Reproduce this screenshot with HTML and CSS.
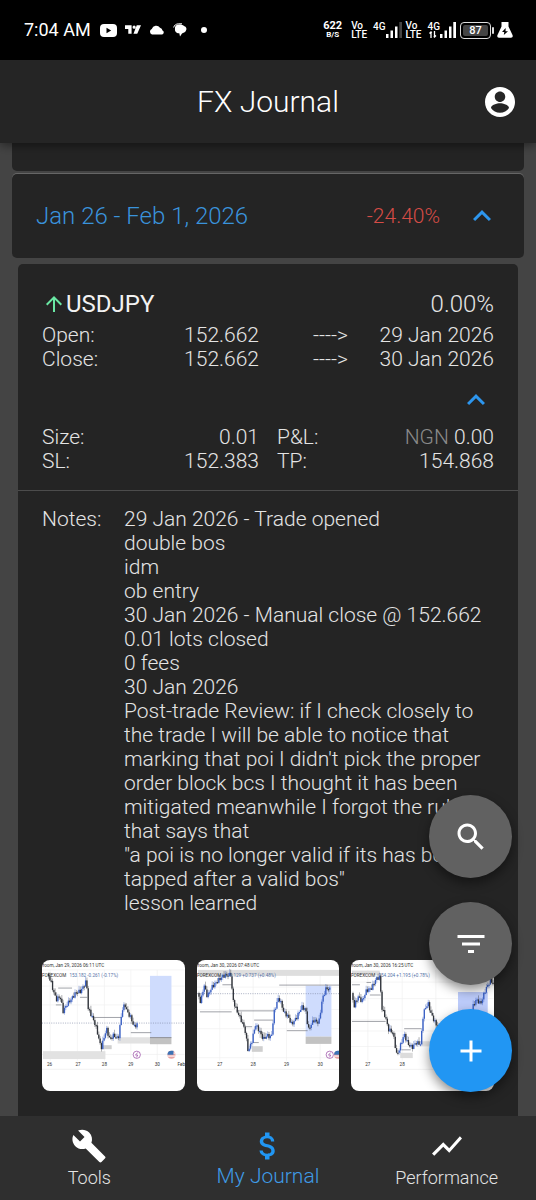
FILE: index.html
```html
<!DOCTYPE html>
<html lang="en">
<head>
<meta charset="utf-8">
<meta name="viewport" content="width=device-width, initial-scale=1">
<title>FX Journal</title>
<link rel="stylesheet" href="styles.css">
</head>
<body>
<div class="status">
  <div class="status-left">
    <span class="clock">7:04 AM</span>
    <svg width="17" height="13" viewBox="0 0 17 13"><rect width="17" height="13" rx="4" fill="#fff"/><path d="M6.5 3.8v5.4L11.2 6.5z" fill="#000"/></svg>
    <svg width="16" height="10" viewBox="0 0 17 10"><path d="M0 0h7v9H3.500V4H0zM12.500 0H17l-4 9H9zM8 2a1.700 1.700 0 1 0 3.400 0 1.700 1.700 0 1 0-3.400 0z" fill="#fff"/></svg>
    <svg width="16" height="10" viewBox="0 0 16 10"><path d="M3 9.500a3 3 0 0 1-.2-5.600A4.600 4.600 0 0 1 11 2.700a3.300 3.300 0 0 1 2.500 2.700 2.200 2.200 0 0 1-.3 4.100z" fill="#fff"/></svg>
    <svg width="14" height="14" viewBox="0 0 14 14"><path d="M3 2.500C5 1 9 1 11 3c2.500.5 3 3 2 4.500C12.500 9.500 10 10 9 10.500L7 13.500 6.300 10.300C3.500 10.500 1.500 8 2 6c-.2-1.500.2-2.700 1-3.500z" fill="#fff"/><path d="M.7 4.500C1 2.500 3 .8 5.500.8H9" fill="none" stroke="#fff"/></svg>
    <svg class="dot" width="6" height="6" viewBox="0 0 6 6"><circle cx="3" cy="3" r="3" fill="#fff"/></svg>
  </div>
  <div class="status-right">
    <div class="speed"><b>622</b><small>B/S</small></div>
    <div class="volte"><span>Vo</span><span>LTE</span></div>
    <div class="signal"><span>4G</span>
      <svg width="16" height="16" viewBox="0 0 16 16"><path d="M0 12h2.500v4H0zM4.500 8.500H7V16H4.500zM9 4.500h2.500V16H9z" fill="#fff"/><path d="M13.300 0H16v16h-2.700z" fill="#444"/></svg></div>
    <div class="volte"><span>Vo</span><span>LTE</span></div>
    <div class="signal"><span class="net">4G<svg width="8" height="7" viewBox="0 0 8 7"><path d="M2 7V1M.5 2.500L2 1l.8.800M5.500 0v6M4.700 5.200l.8.800L7 4.500" fill="none" stroke="#fff" stroke-width="1.300"/></svg></span>
      <svg width="16" height="16" viewBox="0 0 16 16"><path d="M0 12h2.500v4H0zM4.500 8.500H7V16H4.500zM9 4.500h2.500V16H9zM13.300 0H16v16h-2.700z" fill="#fff"/></svg></div>
    <div class="battery"><span>87</span></div>
    <svg class="flask" width="16" height="16" viewBox="0 0 16 16"><path d="M4.500 0h7v4.500l4 8.500c.6 1.500 0 2.700-1.500 2.700H2C.5 15.700-.1 14.500.5 13l4-8.500z" fill="#fff"/><path d="M8.700 6L5 10h2.300L6.800 13 11 9.200H8.500z" fill="#000"/></svg>
  </div>
</div>

<header class="appbar">
  <h1>FX Journal</h1>
  <button class="icon-btn" aria-label="Account"><svg class="icon" viewBox="0 0 24 24"><path d="M12 2C6.480 2 2 6.480 2 12s4.480 10 10 10 10-4.480 10-10S17.520 2 12 2zm0 3c1.930 0 3.500 1.570 3.500 3.500S13.930 12 12 12s-3.500-1.570-3.500-3.500S10.070 5 12 5zm0 14.200c-2.500 0-4.710-1.280-6-3.220.03-1.990 4-3.080 6-3.080 1.990 0 5.970 1.090 6 3.080-1.290 1.940-3.500 3.220-6 3.220z"/></svg></button>
</header>

<main class="journal">
  <div class="scroll">
    <div class="week-prev"></div>
    <section class="week">
      <h2>Jan 26 - Feb 1, 2026</h2>
      <span class="loss">-24.40%</span>
      <button class="icon-btn blue" aria-label="Collapse week"><svg class="icon" viewBox="0 0 24 24"><path d="M12 8l-6 6 1.410 1.410L12 10.830l4.590 4.580L18 14z"/></svg></button>
    </section>

    <article class="trade">
      <div class="trade-top">
        <div class="trade-head">
          <svg class="up" viewBox="0 0 24 24"><path d="M4 12l1.410 1.410L11 7.830V20h2V7.830l5.580 5.590L20 12l-8-8-8 8z"/></svg>
          <h3>USDJPY</h3>
          <span class="pct">0.00%</span>
        </div>
        <div class="pairs">
          <div class="pair"><span>Open:</span><span>152.662</span></div>
          <div class="pair when"><span>----&gt;</span><span>29 Jan 2026</span></div>
          <div class="pair"><span>Close:</span><span>152.662</span></div>
          <div class="pair when"><span>----&gt;</span><span>30 Jan 2026</span></div>
        </div>
        <div class="toggle"><button class="icon-btn blue" aria-label="Collapse trade"><svg class="icon" viewBox="0 0 24 24"><path d="M12 8l-6 6 1.410 1.410L12 10.830l4.590 4.580L18 14z"/></svg></button></div>
        <div class="pairs">
          <div class="pair"><span>Size:</span><span>0.01</span></div>
          <div class="pair"><span>P&amp;L:</span><span><i>NGN</i> 0.00</span></div>
          <div class="pair"><span>SL:</span><span>152.383</span></div>
          <div class="pair"><span>TP:</span><span>154.868</span></div>
        </div>
      </div>
      <div class="notes">
        <span>Notes:</span>
        <div class="notes-text">
          <p>29 Jan 2026 - Trade opened</p>
          <p>double bos</p>
          <p>idm</p>
          <p>ob entry</p>
          <p>30 Jan 2026 - Manual close @ 152.662</p>
          <p>0.01 lots closed</p>
          <p>0 fees</p>
          <p>30 Jan 2026</p>
          <p>Post-trade Review: if I check closely to the trade I will be able to notice that marking that poi I didn't pick the proper order block bcs I thought it has been mitigated meanwhile I forgot the rule that says that</p>
          <p>"a poi is no longer valid if its has been tapped after a valid bos"</p>
          <p>lesson learned</p>
        </div>
      </div>
      <div class="thumbs" id="thumbs"></div>
    </article>
  </div>

  <div class="fabs">
    <button class="fab" aria-label="Search"><svg class="icon" viewBox="0 0 24 24"><path d="M15.500 14h-.79l-.28-.27C15.410 12.590 16 11.110 16 9.500 16 5.910 13.090 3 9.500 3S3 5.910 3 9.500 5.910 16 9.500 16c1.610 0 3.090-.59 4.230-1.570l.27.28v.79l5 4.990L20.490 19l-4.990-5zm-6 0C7.010 14 5 11.990 5 9.500S7.010 5 9.500 5 14 7.010 14 9.500 11.990 14 9.500 14z"/></svg></button>
    <button class="fab" aria-label="Filter"><svg class="icon" viewBox="0 0 24 24"><path d="M10 18h4v-2h-4v2zM3 6v2h18V6H3zm3 7h12v-2H6v2z"/></svg></button>
    <button class="fab add" aria-label="Add trade"><svg class="icon" viewBox="0 0 24 24"><path d="M19 13h-6v6h-2v-6H5v-2h6V5h2v6h6v2z"/></svg></button>
  </div>
</main>

<nav class="tabs">
  <a href="#tools"><svg class="icon" viewBox="0 0 24 24"><path d="M22.700 19l-9.100-9.100c.9-2.300.4-5-1.500-6.900-2-2-5-2.400-7.400-1.300L9 6 6 9 1.600 4.700C.4 7.100.9 10.100 2.900 12.100c1.900 1.900 4.600 2.400 6.900 1.500l9.100 9.100c.4.4 1 .4 1.400 0l2.300-2.300c.5-.4.5-1.100.1-1.400z"/></svg><span>Tools</span></a>
  <a href="#journal" class="active" aria-current="page"><svg class="icon" viewBox="0 0 24 24"><path d="M11.800 10.900c-2.270-.59-3-1.200-3-2.150 0-1.090 1.010-1.850 2.700-1.850 1.780 0 2.440.85 2.500 2.100h2.210c-.07-1.720-1.120-3.300-3.210-3.810V3h-3v2.160c-1.940.42-3.500 1.680-3.500 3.610 0 2.310 1.910 3.460 4.700 4.130 2.500.6 3 1.480 3 2.410 0 .69-.49 1.790-2.700 1.790-2.060 0-2.870-.92-2.980-2.100h-2.200c.12 2.190 1.760 3.420 3.680 3.830V21h3v-2.150c1.950-.37 3.500-1.500 3.500-3.550 0-2.840-2.430-3.810-4.700-4.400z"/></svg><span>My Journal</span></a>
  <a href="#performance"><svg class="icon" viewBox="0 0 24 24"><path d="M3.500 18.490l6-6.010 4 4L22 6.920l-1.410-1.410-7.090 7.970-4-4L2 16.990z"/></svg><span>Performance</span></a>
</nav>
<script src="charts.js"></script>
</body>
</html>
```

FILE: styles.css
```css
* { box-sizing: border-box; }

body {
  margin: 0;
  height: 100vh;
  display: flex;
  flex-direction: column;
  background: #444;
  color: #e4e4e4;
  font: 300 21px/24px Roboto, "Liberation Sans", sans-serif;
}

h1, h2, h3, p { margin: 0; font-weight: 300; }

button { border: 0; padding: 0; background: none; color: inherit; cursor: pointer; }

svg { display: block; flex: none; }

.icon { width: 36px; height: 36px; fill: currentColor; }

.icon-btn { display: block; color: #fff; }

.blue { color: #2d96ee; }

/* System status bar */
.status {
  flex: none;
  height: 60px;
  padding: 0 23px 0 24px;
  display: flex;
  align-items: center;
  justify-content: space-between;
  background: #000;
  color: #fff;
}

.status-left { display: flex; align-items: center; gap: 8px; }

.clock { font-size: 18px; font-weight: 400; margin-right: 1px; }

.dot { margin-left: 6px; }

.status-right { display: flex; align-items: center; font-weight: 500; }

.speed { display: flex; flex-direction: column; align-items: center; margin-right: 9px; font-size: 11px; line-height: 10px; }

.speed small { font-size: 8px; line-height: 8px; font-weight: 700; }

.volte { display: flex; flex-direction: column; margin-right: 6px; font-size: 10px; line-height: 9px; }

.signal { display: flex; align-items: flex-end; margin-right: 4px; font-size: 10px; line-height: 9px; }

.signal > span { height: 16px; }

.net svg { margin-left: 1px; }

.battery {
  position: relative;
  width: 31px;
  height: 17px;
  padding: 2px;
  margin-right: 6px;
  border: 1px solid #ddd;
  border-radius: 4px;
}

.battery span {
  display: block;
  height: 11px;
  background: #444;
  border-radius: 2px;
  font-size: 11px;
  line-height: 11px;
  text-align: center;
}

.battery::after {
  content: "";
  position: absolute;
  right: -4px;
  top: 4px;
  width: 2px;
  height: 7px;
  border-radius: 1px;
  background: #ddd;
}

/* App bar */
.appbar {
  flex: none;
  position: relative;
  z-index: 2;
  height: 83px;
  padding: 0 18px;
  display: grid;
  grid-template-columns: 36px 1fr 36px;
  align-items: center;
  background: #252525;
  box-shadow: 0 2px 10px rgba(0, 0, 0, 0.5);
}

.appbar h1 { grid-column: 2; font-size: 30px; line-height: 36px; text-align: center; color: #fff; }

/* Journal list */
.journal { flex: 1; min-height: 0; position: relative; }

.scroll { height: 100%; overflow: hidden; }

.week-prev {
  height: 28px;
  margin: 0 12px 3px;
  background: #242424;
  border-radius: 0 0 5px 5px;
}

.week {
  margin: 0 12px 6px;
  padding: 24px;
  display: flex;
  align-items: center;
  background: #242424;
  border-radius: 5px;
  box-shadow: 0 -1px 0 #666;
}

.week h2 { flex: 1; font-size: 24px; line-height: 28px; color: #3a93dc; }

.loss { color: #d64c46; margin-right: 24px; }

.trade { margin: 0 18px; background: #242424; border-radius: 5px; }

.trade-top { padding: 24px 24px 17px; border-bottom: 1px solid #4c4c4c; }

.trade-head { display: flex; align-items: center; margin-bottom: 3px; font-size: 24px; line-height: 32px; }

.trade-head h3 { flex: 1; font-size: 24px; font-weight: 400; color: #f2f2f2; }

.up { width: 24px; height: 24px; fill: #6ae8a4; }

.pairs { display: grid; grid-template-columns: 1fr 1fr; column-gap: 18px; }

.pair { display: flex; justify-content: space-between; }

.when { padding-left: 36px; }

.pair i { font-style: normal; color: #8a8a8a; }

.toggle { display: flex; justify-content: flex-end; margin: 11px 0 7px; }

.notes { display: flex; padding: 16px 24px 45px; }

.notes > span { flex: none; width: 82px; }

.thumbs { display: grid; grid-template-columns: repeat(3, 1fr); gap: 12px; padding: 0 24px 48px; }

.thumb { overflow: hidden; border-radius: 8px; background: #fff; }

.thumb svg { width: 100%; }

.thumb text { font: 400 14px Roboto, sans-serif; fill: #333; }

.thumb .quote { fill: #5673a8; }

.fabs {
  position: absolute;
  right: 24px;
  bottom: 24px;
  display: flex;
  flex-direction: column;
  gap: 24px;
}

.fab {
  width: 83px;
  height: 83px;
  display: grid;
  place-items: center;
  border-radius: 50%;
  background: #616161;
  color: #fff;
  box-shadow: 0 5px 12px rgba(0, 0, 0, 0.45);
}

.add { background: #2196f3; }

/* Bottom navigation */
.tabs {
  flex: none;
  height: 84px;
  display: grid;
  grid-template-columns: repeat(3, 1fr);
  background: #2f2f2f;
}

.tabs a {
  display: flex;
  flex-direction: column;
  align-items: center;
  padding-top: 12px;
  color: #e4e4e4;
  font-size: 18px;
  line-height: 28px;
  text-decoration: none;
}

.tabs svg { color: #fff; }

.tabs .active { color: #3f9be6; font-size: 21px; line-height: 24px; }

.tabs .active svg { color: #2196f3; }
```

FILE: charts.js
```js
const charts = [
  {
    label: "Chart 1",
    stamp: "room, Jan 29, 2026 06:11 UTC",
    pair: "FOREXCOM", quote: "153.182 -0.261 (-0.17%)",
    boxes: [[36, 306, 189, 24, "#e2e2e2"], [218, 288, 26, 12, "#cfcfcf"], [262, 264, 100, 19, "#e2e2e2"], [360, 78, 65, 187, "#cfdcfd"], [360, 264, 65, 21, "#c2c2c2"]],
    grid: [60, 109, 166, 316], cols: [58, 140, 222, 302, 382], dots: 221,
    lines: [[82, 115, 124], [75, 166, 92], [148, 143, 170], [186, 204, 272], [302, 250, 364], [360, 265, 425]],
    path: [[50, 72], [60, 95], [66, 120], [76, 150], [88, 140], [97, 185], [108, 165], [122, 148], [136, 128], [150, 125], [168, 92], [172, 175], [186, 205], [196, 230], [212, 298], [228, 238], [238, 270], [250, 258], [264, 268], [276, 180], [284, 165], [292, 190], [300, 200], [312, 232], [322, 224]],
    days: [["26", 56], ["27", 142], ["28", 222], ["29", 302], ["30", 382], ["Feb", 455]],
    event: 320, flag: 425
  },
  {
    label: "Chart 2",
    stamp: "room, Jan 30, 2026 07:48 UTC",
    pair: "FOREXCOM", quote: "154.129 +0.737 (+0.48%)",
    boxes: [[36, 60, 429, 18, "#dedede"], [199, 291, 33, 17, "#cfcfcf"], [222, 248, 18, 18, "#d8d8d8"], [362, 108, 78, 154, "#cfdcfd"], [362, 262, 78, 22, "#c2c2c2"]],
    grid: [112, 180, 238, 326], cols: [102, 203, 304, 406], dots: 132,
    lines: [[42, 187, 138], [152, 184, 266], [178, 232, 200], [206, 212, 264], [110, 105, 139], [282, 106, 465], [305, 244, 368], [202, 280, 220]],
    path: [[36, 130], [44, 160], [54, 105], [64, 140], [78, 112], [94, 95], [112, 78], [136, 74], [141, 148], [152, 180], [166, 210], [178, 240], [188, 308], [200, 272], [210, 225], [222, 245], [234, 270], [246, 258], [258, 265], [266, 190], [278, 148], [284, 150], [296, 188], [308, 200], [320, 225], [334, 205], [350, 172], [362, 180], [370, 242], [386, 212], [402, 220], [412, 150], [424, 115], [438, 120]],
    days: [["27", 102], ["28", 203], ["29", 304], ["30", 406]],
    event: 435, flag: 460
  },
  {
    label: "Chart 3",
    stamp: "room, Jan 30, 2026 16:25 UTC",
    pair: "FOREXCOM", quote: "154.204 +1.195 (+0.78%)",
    boxes: [[36, 62, 84, 14, "#dedede"], [182, 311, 38, 16, "#dcdcdc"], [248, 276, 30, 14, "#e2e2e2"], [357, 127, 90, 80, "#bccbfa"]],
    grid: [97, 147, 211, 245, 292], cols: [84, 188, 290], dots: 0,
    lines: [[36, 216, 138], [36, 105, 60], [80, 98, 94], [90, 136, 123], [194, 238, 246], [186, 302, 214]],
    path: [[36, 130], [42, 172], [54, 140], [66, 155], [80, 122], [96, 115], [108, 88], [122, 80], [124, 170], [138, 205], [146, 240], [160, 250], [172, 320], [184, 285], [194, 255], [206, 285], [218, 295], [230, 280], [244, 285], [252, 190], [266, 160], [276, 195], [294, 232], [320, 250], [350, 240], [376, 270], [398, 180], [412, 150], [426, 162], [440, 120], [456, 90], [465, 105]],
    days: [["27", 84], ["28", 188], ["29", 290]]
  }
];

const rect = (x, y, w, h, fill) => `<rect x="${x}" y="${y}" width="${w}" height="${h}" fill="${fill}"/>`;
const line = (x1, y1, x2, y2, stroke, extra = "") =>
  `<path d="M${x1} ${y1}L${x2} ${y2}" stroke="${stroke}" stroke-width="2" ${extra}/>`;

/* Candles follow the price path at a fixed step, with a small repeatable wobble. */
function candles(path) {
  let out = "", prev = path[0][1], seg = 0, n = 0;
  for (let x = path[0][0] + 3; x <= path[path.length - 1][0]; x += 4) {
    while (path[seg + 1][0] < x) seg++;
    const [x0, y0] = path[seg], [x1, y1] = path[seg + 1];
    const y = y0 + (y1 - y0) * (x - x0) / (x1 - x0) + Math.sin(n * 2.4) * 6;
    const rising = y < prev;
    const colour = rising ? "#3a60c4" : "#30343b";
    const top = Math.min(y, prev), height = Math.max(4, Math.abs(y - prev));
    const wick = 4 + (n * 7) % 9;
    out += line(x, top - wick, x, top + height + 12 - wick, colour, 'opacity=".6"');
    out += rect(x - 2, top, 4, height, colour);
    prev = y;
    n++;
  }
  return out;
}

function draw(c) {
  let s = "";
  s += c.grid.map(y => line(33, y, 465, y, "#f0f0f0")).join("");
  s += c.cols.map(x => line(x, 60, x, 335, "#f0f0f0")).join("");
  s += c.boxes.map(b => rect(...b)).join("");
  s += line(33, 361, 465, 361, "#ececec");
  if (c.dots) s += line(33, c.dots, 465, c.dots, "#7c86a3", 'stroke-dasharray="3 4"');
  s += c.lines.map(([a, y, b]) => line(a, y, b, y, "#70747c")).join("");
  s += candles(c.path);
  s += `<text x="35" y="52">${c.stamp}</text><text x="33" y="81">${c.pair}</text><text class="quote" x="116" y="81">${c.quote}</text>`;
  s += c.days.map(([d, x]) => `<text x="${x}" y="350" text-anchor="middle">${d}</text>`).join("");
  if (c.event) {
    s += `<circle cx="${c.event}" cy="317" r="11" fill="#fff" stroke="#8e3a9d" stroke-width="2"/><path d="M${c.event + 3} 310l-7 8h7l-4 7" fill="none" stroke="#8e3a9d" stroke-width="2"/>`;
    s += `<circle cx="${c.flag}" cy="317" r="12" fill="#e9a3a3"/><path d="M${c.flag - 11} 312h22M${c.flag - 11} 321h22" stroke="#fff" stroke-width="3"/><path d="M${c.flag - 12} 317a12 12 0 0 1 12-12h6v12z" fill="#3c73b5"/>`;
  }
  return `<button class="thumb" aria-label="${c.label}"><svg viewBox="33 30 432 396">${s}</svg></button>`;
}

document.getElementById("thumbs").innerHTML = charts.map(draw).join("");
```
